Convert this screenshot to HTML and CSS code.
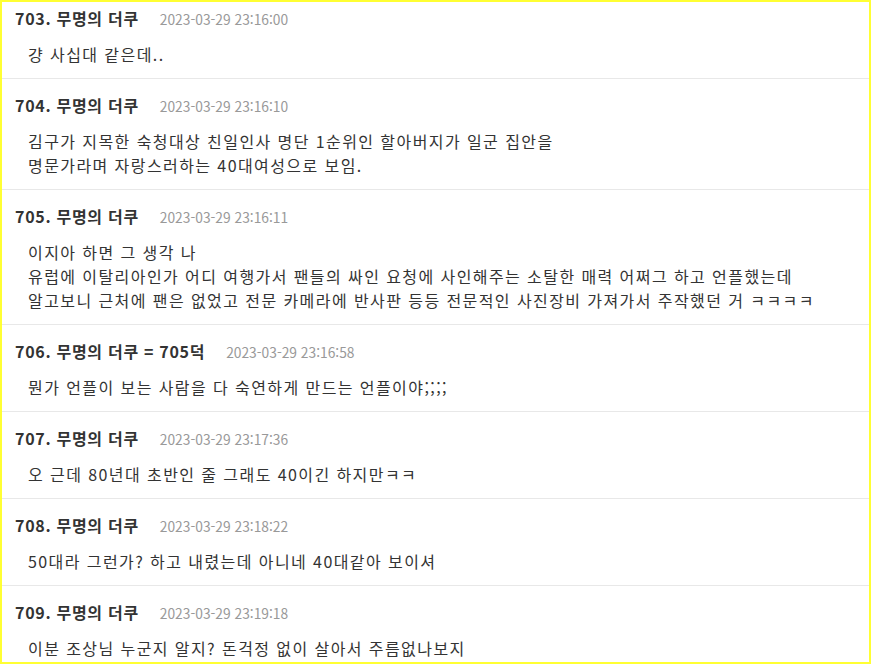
FILE: index.html
```html
<!DOCTYPE html>
<html lang="ko">
<head>
<meta charset="utf-8">
<link rel="stylesheet" href="styles.css">
</head>
<body>
<div class="frame">
  <ul class="list">
    <li class="post">
      <div class="head"><span class="name">703. 무명의 더쿠</span><span class="date">2023-03-29 23:16:00</span></div>
      <div class="body">걍 사십대 같은데..</div>
    </li>
    <li class="post">
      <div class="head"><span class="name">704. 무명의 더쿠</span><span class="date">2023-03-29 23:16:10</span></div>
      <div class="body">김구가 지목한 숙청대상 친일인사 명단 1순위인 할아버지가 일군 집안을<br>명문가라며 자랑스러하는 40대여성으로 보임.</div>
    </li>
    <li class="post">
      <div class="head"><span class="name">705. 무명의 더쿠</span><span class="date">2023-03-29 23:16:11</span></div>
      <div class="body">이지아 하면 그 생각 나<br>유럽에 이탈리아인가 어디 여행가서 팬들의 싸인 요청에 사인해주는 소탈한 매력 어쩌그 하고 언플했는데<br>알고보니 근처에 팬은 없었고 전문 카메라에 반사판 등등 전문적인 사진장비 가져가서 주작했던 거 ㅋㅋㅋㅋ</div>
    </li>
    <li class="post">
      <div class="head"><span class="name">706. 무명의 더쿠 = 705덕</span><span class="date">2023-03-29 23:16:58</span></div>
      <div class="body">뭔가 언플이 보는 사람을 다 숙연하게 만드는 언플이야;;;;</div>
    </li>
    <li class="post">
      <div class="head"><span class="name">707. 무명의 더쿠</span><span class="date">2023-03-29 23:17:36</span></div>
      <div class="body">오 근데 80년대 초반인 줄 그래도 40이긴 하지만ㅋㅋ</div>
    </li>
    <li class="post">
      <div class="head"><span class="name">708. 무명의 더쿠</span><span class="date">2023-03-29 23:18:22</span></div>
      <div class="body">50대라 그런가? 하고 내렸는데 아니네 40대같아 보이셔</div>
    </li>
    <li class="post">
      <div class="head"><span class="name">709. 무명의 더쿠</span><span class="date">2023-03-29 23:19:18</span></div>
      <div class="body">이분 조상님 누군지 알지? 돈걱정 없이 살아서 주름없나보지</div>
    </li>
  </ul>
</div>
</body>
</html>
```

FILE: styles.css
```css
html, body {
  margin: 0;
  padding: 0;
  background: #fff;
}
.frame {
  box-sizing: border-box;
  height: 100vh;
  border: 2px solid #ffff33;
  overflow: hidden;
  font-family: "Noto Sans CJK KR", "Noto Sans", sans-serif;
  color: #333;
}
.list {
  list-style: none;
  margin: -10px 0 0 0;
  padding: 0;
}
.post {
  padding: 16px 13px 12px 13px;
  border-bottom: 1px solid #e8e8e8;
}
.head {
  display: flex;
  align-items: baseline;
  height: 20px;
  line-height: 20px;
}
.name {
  font-size: 16px;
  font-weight: bold;
  letter-spacing: 0.7px;
  color: #333;
}
.date {
  margin-left: 21px;
  font-size: 13.8px;
  color: #999;
}
.body {
  margin-top: 14px;
  padding-left: 13px;
  font-size: 16px;
  letter-spacing: 1.42px;
  line-height: 24px;
  color: #333;
}
```
